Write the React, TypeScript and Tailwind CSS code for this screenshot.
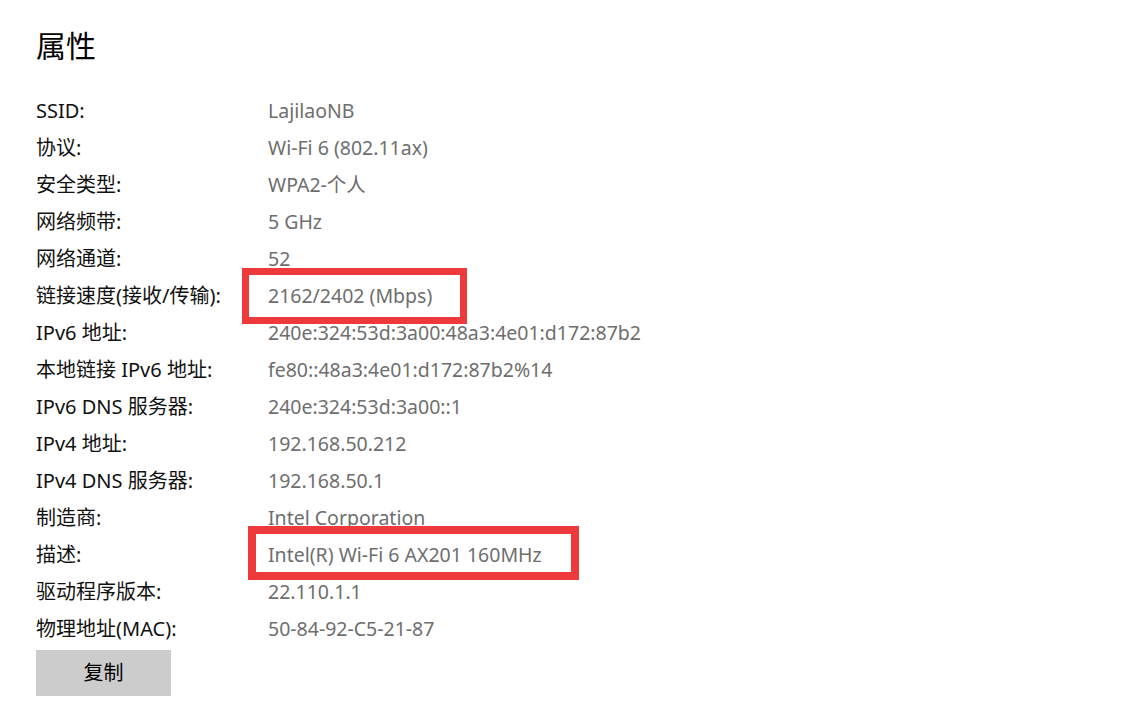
const rows: [string, string][] = [
  ["SSID:", "LajilaoNB"],
  ["协议:", "Wi-Fi 6 (802.11ax)"],
  ["安全类型:", "WPA2-个人"],
  ["网络频带:", "5 GHz"],
  ["网络通道:", "52"],
  ["链接速度(接收/传输):", "2162/2402 (Mbps)"],
  ["IPv6 地址:", "240e:324:53d:3a00:48a3:4e01:d172:87b2"],
  ["本地链接 IPv6 地址:", "fe80::48a3:4e01:d172:87b2%14"],
  ["IPv6 DNS 服务器:", "240e:324:53d:3a00::1"],
  ["IPv4 地址:", "192.168.50.212"],
  ["IPv4 DNS 服务器:", "192.168.50.1"],
  ["制造商:", "Intel Corporation"],
  ["描述:", "Intel(R) Wi-Fi 6 AX201 160MHz"],
  ["驱动程序版本:", "22.110.1.1"],
  ["物理地址(MAC):", "50-84-92-C5-21-87"],
]

export default function App() {
  return (
    <div
      className="relative h-[725px] w-[1130px] overflow-hidden bg-white px-[36px] pt-[26px]"
      style={{ fontFamily: '"Noto Sans", "Noto Sans CJK SC", sans-serif' }}
    >
      <h1 className="mb-[26px] h-[40px] text-[30px] leading-[40px] font-normal text-black">
        属性
      </h1>

      <div className="grid grid-cols-[232px_1fr]">
        {rows.map(([label, value]) => (
          <div key={label} className="contents">
            <div className="h-[37px] text-[20px] leading-[37px] text-[#111]">{label}</div>
            <div className="h-[37px] text-[19.5px] leading-[37px] text-[#6e6e6e]">{value}</div>
          </div>
        ))}
      </div>

      <button className="mt-[3px] h-[46px] w-[135px] bg-[#cccccc] text-[20px] text-black">
        复制
      </button>

      <div className="pointer-events-none absolute top-[268px] left-[242px] h-[56px] w-[225px] border-[7px] border-[#ef3a3c]" />
      <div className="pointer-events-none absolute top-[526px] left-[248px] h-[54px] w-[331px] border-[8px] border-[#ef3a3c]" />
    </div>
  )
}
